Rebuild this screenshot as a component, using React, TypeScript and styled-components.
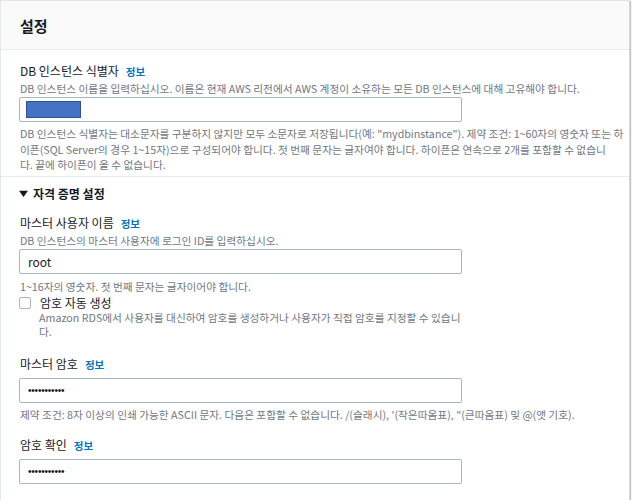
import React from "react";
import styled, { createGlobalStyle } from "styled-components";

const GlobalStyle = createGlobalStyle`
  html, body {
    margin: 0;
    padding: 0;
    background: #ffffff;
  }
  body {
    font-family: "Noto Sans CJK KR", "Noto Sans", sans-serif;
    color: #16191f;
  }
`;

const Panel = styled.div`
  width: 628px;
  border: 1px solid #e4e7e7;
  border-right-color: #d5dbdb;
  border-bottom-color: #c4cbcb;
  box-shadow: 1px 1px 1px rgba(0, 28, 36, 0.25);
  background: #ffffff;
`;

const Header = styled.div`
  height: 48px;
  display: flex;
  align-items: center;
  padding: 0 19px;
  background: #fafafa;
  border-bottom: 1px solid #eaeded;
`;

const Title = styled.h2`
  margin: 0;
  font-size: 15px;
  font-weight: 700;
  color: #16191f;
`;

const Section = styled.div<{ $pad: string; $divider?: boolean }>`
  padding: ${(p) => p.$pad};
  border-top: ${(p) => (p.$divider ? "1px solid #eaeded" : "none")};
`;

const Field = styled.div<{ $top?: number }>`
  display: flex;
  flex-direction: column;
  margin-top: ${(p) => p.$top ?? 0}px;
`;

const Label = styled.div<{ $lh?: number }>`
  font-size: 12px;
  line-height: ${(p) => p.$lh ?? 18}px;
  color: #16191f;
  padding-left: 1px;
`;

const Info = styled.a`
  margin-left: 7px;
  font-size: 10.5px;
  font-weight: 700;
  color: #0073bb;
  text-decoration: none;
`;

const Description = styled.div`
  font-size: 10.7px;
  line-height: 15px;
  color: #6f777f;
  padding-left: 1px;
`;

const Hint = styled(Description)<{ $top?: number }>`
  margin-top: ${(p) => p.$top ?? 5}px;
  margin-right: -14px;
  line-height: 15.5px;
`;

const InputBox = styled.div<{ $top?: number }>`
  box-sizing: border-box;
  width: 443px;
  height: 25px;
  margin-top: ${(p) => p.$top ?? 1}px;
  display: flex;
  align-items: center;
  padding: 0 6px;
  border: 1px solid #aab7b8;
  border-radius: 2px;
  background: #ffffff;
`;

const TextInput = styled.input<{ $secret?: boolean }>`
  width: 100%;
  border: none;
  outline: none;
  padding: 0 2px;
  background: transparent;
  font-family: ${(p) => (p.$secret ? '"Liberation Sans", sans-serif' : '"Noto Sans CJK KR", sans-serif')};
  font-size: ${(p) => (p.$secret ? "10px" : "12px")};
  letter-spacing: ${(p) => (p.$secret ? "-0.2px" : "0")};
  color: #16191f;
`;

const Redaction = styled.span`
  width: 55px;
  height: 17px;
  background: #4472c4;
  border: 1px solid #2f528f;
  box-sizing: border-box;
`;

const Toggle = styled.div`
  display: flex;
  align-items: center;
  gap: 5px;
  font-size: 12px;
  font-weight: 700;
  line-height: 18px;
  color: #16191f;
`;

const Caret = styled.svg`
  width: 9px;
  height: 9px;
  fill: #16191f;
`;

const CheckRow = styled.div`
  display: grid;
  grid-template-columns: 20px 1fr;
  width: 443px;
  margin-top: 1px;
`;

const CheckBox = styled.span`
  box-sizing: border-box;
  width: 12px;
  height: 12px;
  margin-top: 2px;
  border: 1px solid #aab7b8;
  border-radius: 2px;
  background: #ffffff;
`;

const CheckText = styled.div`
  display: flex;
  flex-direction: column;
`;

const CheckDescription = styled(Description)`
  line-height: 14px;
  padding-left: 0;
`;

export default function App() {
  return (
    <>
      <GlobalStyle />
      <Panel>
        <Header>
          <Title>설정</Title>
        </Header>

        <Section $pad="12px 18px 3px">
          <Field>
            <Label>
              DB 인스턴스 식별자<Info href="#">정보</Info>
            </Label>
            <Description>
              DB 인스턴스 이름을 입력하십시오. 이름은 현재 AWS 리전에서 AWS 계정이 소유하는 모든 DB 인스턴스에 대해 고유해야 합니다.
            </Description>
            <InputBox>
              <Redaction />
            </InputBox>
            <Hint $top={4}>
              DB 인스턴스 식별자는 대소문자를 구분하지 않지만 모두 소문자로 저장됩니다(예: "mydbinstance"). 제약 조건: 1~60자의 영숫자 또는 하
              <br />
              이픈(SQL Server의 경우 1~15자)으로 구성되어야 합니다. 첫 번째 문자는 글자여야 합니다. 하이픈은 연속으로 2개를 포함할 수 없습니
              <br />
              다. 끝에 하이픈이 올 수 없습니다.
            </Hint>
          </Field>
        </Section>

        <Section $pad="8px 18px 18px" $divider>
          <Toggle>
            <Caret viewBox="0 0 10 10">
              <path d="M0 2 L10 2 L5 9 Z" />
            </Caret>
            자격 증명 설정
          </Toggle>

          <Field $top={11}>
            <Label>
              마스터 사용자 이름<Info href="#">정보</Info>
            </Label>
            <Description>DB 인스턴스의 마스터 사용자에 로그인 ID를 입력하십시오.</Description>
            <InputBox>
              <TextInput readOnly value="root" />
            </InputBox>
            <Hint>1~16자의 영숫자. 첫 번째 문자는 글자이어야 합니다.</Hint>
          </Field>

          <CheckRow>
            <CheckBox />
            <CheckText>
              <Label $lh={16}>암호 자동 생성</Label>
              <CheckDescription>
                Amazon RDS에서 사용자를 대신하여 암호를 생성하거나 사용자가 직접 암호를 지정할 수 있습니
                <br />
                다.
              </CheckDescription>
            </CheckText>
          </CheckRow>

          <Field $top={16}>
            <Label>
              마스터 암호<Info href="#">정보</Info>
            </Label>
            <InputBox $top={4}>
              <TextInput $secret type="password" readOnly value="12345678901" />
            </InputBox>
            <Hint $top={4}>
              제약 조건: 8자 이상의 인쇄 가능한 ASCII 문자. 다음은 포함할 수 없습니다. /(슬래시), '(작은따옴표), "(큰따옴표) 및 @(앳 기호).
            </Hint>
          </Field>

          <Field $top={13}>
            <Label>
              암호 확인<Info href="#">정보</Info>
            </Label>
            <InputBox $top={4}>
              <TextInput $secret type="password" readOnly value="12345678901" />
            </InputBox>
          </Field>
        </Section>
      </Panel>
    </>
  );
}
